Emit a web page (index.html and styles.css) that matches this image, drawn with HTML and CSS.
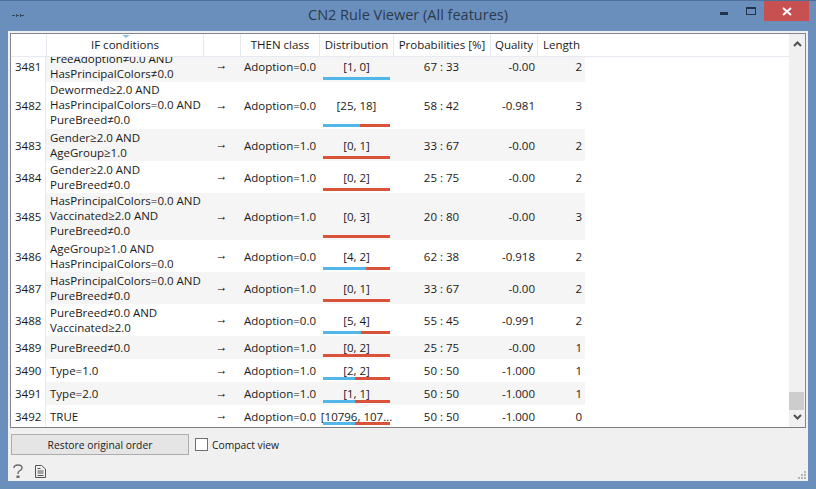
FILE: index.html
```html
<!DOCTYPE html>
<html>
	<head>
		<meta charset="UTF-8">
		<title>CN2 Rule Viewer (All features)</title>
		<link rel="stylesheet" href="styles.css">
	</head>
	<body>
		<div class="window">
			<div class="titlebar">
				<span class="sys_icon">
					<svg width="12" height="5" viewBox="0 0 12 5"><path d="M0 2h3v1H0zM5 2h2v1H5zM9 2h3v1H9zM4 1h1v3H4zM8 1h1v3H8z" fill="#33475f"/></svg>
				</span>
				<span class="title">CN2 Rule Viewer (All features)</span>
				<span class="win_btns">
					<span class="btn_min"></span>
					<span class="btn_max"></span>
					<span class="btn_close">
						<svg width="10" height="9" viewBox="0 0 10 9"><path d="M1 1l8 7M9 1L1 8" stroke="#fff" stroke-width="2" fill="none"/></svg>
					</span>
				</span>
			</div>
			<div class="client">
				<div class="view">
					<div class="table_area">
						<div class="grid header">
							<div class="rowhead"></div>
							<div class="hcell sorted">IF conditions</div>
							<div class="hcell"></div>
							<div class="hcell">THEN class</div>
							<div class="hcell">Distribution</div>
							<div class="hcell">Probabilities [%]</div>
							<div class="hcell">Quality</div>
							<div class="hcell">Length</div>
						</div>
						<div class="rows">
							<div class="grid row stripe h2 scrolled">
								<div class="rowhead">3481</div>
								<div class="cond">FreeAdoption≠0.0 AND<br>HasPrincipalColors≠0.0</div>
								<div class="arrow">→</div>
								<div class="then">Adoption=0.0</div>
								<div class="dist">[1, 0]<span class="bar"><i class="blue" style="width:100%"></i></span></div>
								<div class="prob">67 : 33</div>
								<div class="qual">-0.00</div>
								<div class="len">2</div>
							</div>
							<div class="grid row h3">
								<div class="rowhead">3482</div>
								<div class="cond">Dewormed≥2.0 AND<br>HasPrincipalColors=0.0 AND<br>PureBreed≠0.0</div>
								<div class="arrow">→</div>
								<div class="then">Adoption=0.0</div>
								<div class="dist">[25, 18]<span class="bar"><i class="blue" style="width:55%"></i><i class="red" style="width:45%"></i></span></div>
								<div class="prob">58 : 42</div>
								<div class="qual">-0.981</div>
								<div class="len">3</div>
							</div>
							<div class="grid row stripe h2">
								<div class="rowhead">3483</div>
								<div class="cond">Gender≥2.0 AND<br>AgeGroup≥1.0</div>
								<div class="arrow">→</div>
								<div class="then">Adoption=1.0</div>
								<div class="dist">[0, 1]<span class="bar"><i class="red" style="width:100%"></i></span></div>
								<div class="prob">33 : 67</div>
								<div class="qual">-0.00</div>
								<div class="len">2</div>
							</div>
							<div class="grid row h2">
								<div class="rowhead">3484</div>
								<div class="cond">Gender≥2.0 AND<br>PureBreed≠0.0</div>
								<div class="arrow">→</div>
								<div class="then">Adoption=1.0</div>
								<div class="dist">[0, 2]<span class="bar"><i class="red" style="width:100%"></i></span></div>
								<div class="prob">25 : 75</div>
								<div class="qual">-0.00</div>
								<div class="len">2</div>
							</div>
							<div class="grid row stripe h3">
								<div class="rowhead">3485</div>
								<div class="cond">HasPrincipalColors=0.0 AND<br>Vaccinated≥2.0 AND<br>PureBreed≠0.0</div>
								<div class="arrow">→</div>
								<div class="then">Adoption=1.0</div>
								<div class="dist">[0, 3]<span class="bar"><i class="red" style="width:100%"></i></span></div>
								<div class="prob">20 : 80</div>
								<div class="qual">-0.00</div>
								<div class="len">3</div>
							</div>
							<div class="grid row h2">
								<div class="rowhead">3486</div>
								<div class="cond">AgeGroup≥1.0 AND<br>HasPrincipalColors=0.0</div>
								<div class="arrow">→</div>
								<div class="then">Adoption=0.0</div>
								<div class="dist">[4, 2]<span class="bar"><i class="blue" style="width:64%"></i><i class="red" style="width:36%"></i></span></div>
								<div class="prob">62 : 38</div>
								<div class="qual">-0.918</div>
								<div class="len">2</div>
							</div>
							<div class="grid row stripe h2">
								<div class="rowhead">3487</div>
								<div class="cond">HasPrincipalColors=0.0 AND<br>PureBreed≠0.0</div>
								<div class="arrow">→</div>
								<div class="then">Adoption=1.0</div>
								<div class="dist">[0, 1]<span class="bar"><i class="red" style="width:100%"></i></span></div>
								<div class="prob">33 : 67</div>
								<div class="qual">-0.00</div>
								<div class="len">2</div>
							</div>
							<div class="grid row h2">
								<div class="rowhead">3488</div>
								<div class="cond">PureBreed≠0.0 AND<br>Vaccinated≥2.0</div>
								<div class="arrow">→</div>
								<div class="then">Adoption=0.0</div>
								<div class="dist">[5, 4]<span class="bar"><i class="blue" style="width:56%"></i><i class="red" style="width:44%"></i></span></div>
								<div class="prob">55 : 45</div>
								<div class="qual">-0.991</div>
								<div class="len">2</div>
							</div>
							<div class="grid row stripe h1">
								<div class="rowhead">3489</div>
								<div class="cond">PureBreed≠0.0</div>
								<div class="arrow">→</div>
								<div class="then">Adoption=1.0</div>
								<div class="dist">[0, 2]<span class="bar"><i class="red" style="width:100%"></i></span></div>
								<div class="prob">25 : 75</div>
								<div class="qual">-0.00</div>
								<div class="len">1</div>
							</div>
							<div class="grid row h1">
								<div class="rowhead">3490</div>
								<div class="cond">Type=1.0</div>
								<div class="arrow">→</div>
								<div class="then">Adoption=1.0</div>
								<div class="dist">[2, 2]<span class="bar"><i class="blue" style="width:48%"></i><i class="red" style="width:52%"></i></span></div>
								<div class="prob">50 : 50</div>
								<div class="qual">-1.000</div>
								<div class="len">1</div>
							</div>
							<div class="grid row stripe h1">
								<div class="rowhead">3491</div>
								<div class="cond">Type=2.0</div>
								<div class="arrow">→</div>
								<div class="then">Adoption=1.0</div>
								<div class="dist">[1, 1]<span class="bar"><i class="blue" style="width:48%"></i><i class="red" style="width:52%"></i></span></div>
								<div class="prob">50 : 50</div>
								<div class="qual">-1.000</div>
								<div class="len">1</div>
							</div>
							<div class="grid row h1 last">
								<div class="rowhead">3492</div>
								<div class="cond">TRUE</div>
								<div class="arrow">→</div>
								<div class="then">Adoption=0.0</div>
								<div class="dist">[10796, 107...<span class="bar"><i class="blue" style="width:48%"></i><i class="red" style="width:52%"></i></span></div>
								<div class="prob">50 : 50</div>
								<div class="qual">-1.000</div>
								<div class="len">0</div>
							</div>
						</div>
					</div>
					<div class="scrollbar">
						<svg class="arr" width="9" height="6" viewBox="0 0 9 6"><path d="M1 5l3.500-3.500L8 5" stroke="#505050" stroke-width="2" fill="none"/></svg>
						<div class="track"><div class="thumb"></div></div>
						<svg class="arr" width="9" height="6" viewBox="0 0 9 6"><path d="M1 1l3.500 3.500L8 1" stroke="#505050" stroke-width="2" fill="none"/></svg>
					</div>
				</div>
				<div class="controls">
					<button class="restore">Restore original order</button>
					<label class="check"><span class="box"></span>Compact view</label>
				</div>
				<div class="status">
					<svg width="10" height="14" viewBox="0 0 10 14"><path d="M1 4C1 2 3 1 5 1s4 1 4 3-2 2.500-3 3.300C5 8 5 9 5 10" stroke="#6b6b6b" stroke-width="1.400" fill="none"/><path d="M3.500 11.500h3V14h-3z" fill="#6b6b6b"/></svg>
					<svg width="11" height="13" viewBox="0 0 11 13"><path d="M.5 .5h6l4 3.500v8.500H.5zM2.500 6h6M2.500 8h6M2.500 10.500h6M2.500 3.500h3" stroke="#555" fill="none"/></svg>
					<span class="grip">
						<svg width="9" height="9" viewBox="0 0 9 9"><path d="M6 0h2v2H6zM3 3h2v2H3zM6 3h2v2H6zM0 6h2v2H0zM3 6h2v2H3zM6 6h2v2H6z" fill="#b5b5b5"/></svg>
					</span>
				</div>
			</div>
		</div>
	</body>
</html>
```
FILE: styles.css
```css
*{
	margin: 0;
	padding: 0;
	box-sizing: border-box;
}
html, body{
	height: 100%;
}
body{
	background: #6b8fbd;
	font-family: "Open Sans", "Liberation Sans", sans-serif;
	font-size: 11.5px;
	color: #1a1a1a;
	overflow: hidden;
}
.window{
	height: 489px;
	display: flex;
	flex-direction: column;
	padding: 0 8px 8px 8px;
	border-top: 1px solid #4e6f9a;
}
.titlebar{
	height: 30px;
	display: flex;
	align-items: center;
	position: relative;
}
.sys_icon{
	display: flex;
	margin: 0 0 2px 4px;
}
.title{
	position: absolute;
	left: 0;
	right: 0;
	text-align: center;
	font-size: 14.5px;
	color: #2c3a4d;
	top: 4px;
}
.win_btns{
	margin-left: auto;
	display: flex;
	align-items: flex-start;
	align-self: flex-start;
	position: relative;
}
.btn_min{
	width: 8px;
	height: 3px;
	background: #22344c;
	margin: 11px 18px 0 0;
}
.btn_max{
	width: 10px;
	height: 8px;
	border: 1px solid #22344c;
	border-top-width: 2px;
	margin: 6px 8px 0 0;
}
.btn_close{
	width: 45px;
	height: 20px;
	background: #c75050;
	display: flex;
	align-items: center;
	justify-content: center;
	margin-right: -1px;
}
.client{
	flex: 1;
	background: #f0f0f0;
	padding: 2px 2px 0 2px;
	display: flex;
	flex-direction: column;
}
.view{
	height: 395px;
	background: #fff;
	border: 1px solid #828790;
	border-bottom-color: #7d7d7d;
	display: flex;
}
.table_area{
	flex: 1;
	display: flex;
	flex-direction: column;
	overflow: hidden;
}
.grid{
	display: grid;
	grid-template-columns: 35px 157px 37px 79px 74px 97px 47px 48px;
	width: 574px;
}
.header{
	flex: none;
	height: 23px;
	width: 778px;
	border-bottom: 1px solid #e6eaf0;
}
.hcell{
	border-left: 1px solid #e6eaf0;
	text-align: center;
	line-height: 22px;
	position: relative;
}
.sorted::before{
	content: "";
	position: absolute;
	left: 75px;
	top: 1px;
	border-style: solid;
	border-color: #8fc4e0 transparent transparent;
	border-width: 3px 4px 0;
}
.rows{
	flex: 1;
	overflow: hidden;
}
.scrolled{
	margin-top: -7px;
}
.rowhead{
	background: #fff;
	display: flex;
	align-items: center;
	padding-left: 4px;
}
.row .rowhead{
	border-right: 1px solid #e6eaf0;
	box-shadow: 0 1px 0 #e6eaf0;
}
.h1{
	height: 23px;
}
.h2{
	height: 32px;
}
.h3{
	height: 47px;
}
.last{
	height: 22px;
}
.stripe > div{
	background-color: #f5f5f5;
}
.stripe > .rowhead{
	background-color: #fff;
}
.cond{
	line-height: 15px;
	padding-left: 4px;
	overflow: hidden;
	white-space: nowrap;
}
.h1 .cond{
	line-height: 23px;
}
.h2 .cond{
	padding-top: 1px;
}
.arrow, .then, .prob, .dist{
	display: flex;
	align-items: center;
	justify-content: center;
}
.arrow{
	font-family: "Liberation Sans", sans-serif;
	font-size: 12px;
	font-weight: bold;
	color: #000;
	padding-bottom: 2px;
}
.then, .dist{
	padding-left: 1px;
}
.qual, .len{
	display: flex;
	align-items: center;
	justify-content: flex-end;
}
.qual{
	padding-right: 2px;
}
.len{
	padding-right: 3px;
}
.dist{
	position: relative;
	white-space: nowrap;
}
.bar{
	position: absolute;
	left: 4px;
	right: 3px;
	bottom: 2px;
	height: 3px;
	display: flex;
}
.bar i{
	display: block;
	height: 3px;
}
.blue{
	background: #51b6e8;
}
.red{
	background: #d9523a;
}
.scrollbar{
	width: 16px;
	background: #f0f0f0;
	display: flex;
	flex-direction: column;
	align-items: center;
	padding: 7px 0;
}
.arr{
	flex: none;
}
.track{
	flex: 1;
	width: 100%;
	display: flex;
	flex-direction: column;
	justify-content: flex-end;
	padding-bottom: 4px;
}
.thumb{
	height: 18px;
	width: 15px;
	background: #cdcdcd;
}
.controls{
	display: flex;
	align-items: center;
	height: 21px;
	margin: 6px 0 0 1px;
	font-size: 10.3px;
}
.restore{
	width: 178px;
	height: 21px;
	background: #e5e5e5;
	border: 1px solid #acacac;
	font: inherit;
	color: #222;
}
.check{
	display: flex;
	align-items: center;
	margin-left: 6px;
}
.box{
	width: 13px;
	height: 13px;
	background: #fff;
	border: 1px solid #707070;
	margin-right: 4px;
}
.status{
	flex: 1;
	display: flex;
	align-items: center;
	gap: 12px;
	padding: 6px 0 0 3px;
	position: relative;
}
.grip{
	position: absolute;
	right: -1px;
	bottom: 1px;
	display: flex;
}
```
